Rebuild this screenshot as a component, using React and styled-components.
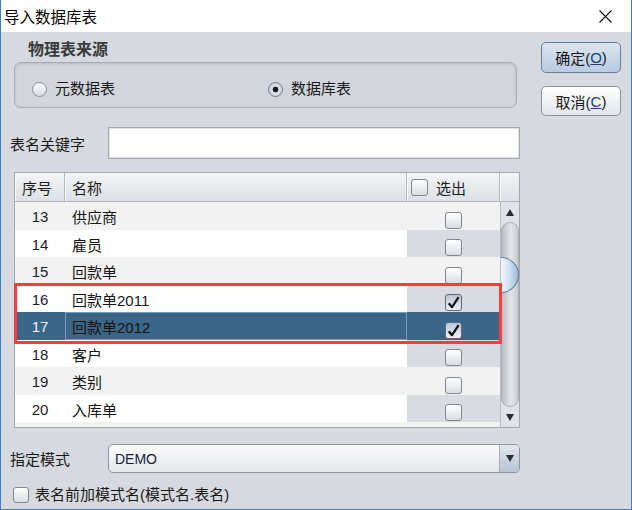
import React from 'react'
import styled, { createGlobalStyle } from 'styled-components'

const GlobalStyle = createGlobalStyle`
  html, body { margin: 0; padding: 0; background: #fff; }
  body { font-family: "Liberation Sans", "Noto Sans CJK SC", sans-serif; }
`

const Window = styled.div`
  position: relative;
  width: 632px;
  height: 510px;
  box-sizing: border-box;
  border: 1px solid #3b7fd0;
  border-top: none;
  background: #d6d9df;
  display: flex;
  flex-direction: column;
  overflow: hidden;
  font-size: 15px;
  color: #1a1a1a;
`

const TitleBar = styled.div`
  height: 32px;
  flex: none;
  background: #fff;
  display: flex;
  align-items: center;
  justify-content: space-between;
  padding: 0 19px 0 3px;
  font-size: 15.5px;
  color: #000;
`

const TopRow = styled.div`
  display: flex;
  align-items: flex-start;
  margin-top: 9px;
`

const GroupArea = styled.div`
  margin-left: 13px;
  width: 503px;
`

const GroupLabel = styled.div`
  padding-left: 14px;
  height: 18px;
  line-height: 18px;
  font-size: 16px;
  font-weight: bold;
  color: #3a3a3a;
  margin-bottom: 3px;
`

const GroupBox = styled.div`
  height: 46px;
  box-sizing: border-box;
  border: 1px solid #a7acb3;
  border-radius: 7px;
  background: #d2d5db;
  box-shadow: inset 0 1px 3px rgba(0, 0, 0, 0.12);
  display: flex;
  align-items: center;
  padding: 8px 0 0 17px;
`

const RadioItem = styled.label`
  display: flex;
  align-items: center;
  gap: 8px;
  width: ${p => p.$w || 'auto'};
  line-height: 18px;
`

const RadioDot = styled.span`
  width: 15px;
  height: 15px;
  box-sizing: border-box;
  border-radius: 50%;
  border: 1px solid ${p => (p.$on ? '#6f7c8b' : '#8a9099')};
  background: ${p => (p.$on
    ? 'radial-gradient(circle, #1c1c1c 0 2.6px, #dfe6ee 3.2px, #b7c4d2 100%)'
    : 'linear-gradient(#fdfdfd, #d7dade)')};
`

const ButtonCol = styled.div`
  margin: 1px 0 0 24px;
  display: flex;
  flex-direction: column;
  gap: 13px;
`

const DlgButton = styled.div`
  width: 80px;
  height: ${p => p.$h}px;
  box-sizing: border-box;
  border-radius: 5px;
  border: 1px solid ${p => (p.$primary ? '#60809f' : '#8d939b')};
  background: ${p => (p.$primary
    ? 'linear-gradient(#dbe5f0, #b8cbdf)'
    : 'linear-gradient(#ffffff, #e2e5e9)')};
  display: flex;
  align-items: center;
  justify-content: center;
  color: #1a1a1a;
  u { color: #233f73; }
`

const FieldRow = styled.div`
  display: flex;
  align-items: center;
  height: ${p => p.$h}px;
  margin-top: ${p => p.$mt}px;
  padding-left: 9px;
`

const FieldLabel = styled.div`
  width: 98px;
`

const TextInput = styled.div`
  width: 412px;
  height: 100%;
  box-sizing: border-box;
  background: #fff;
  border: 1px solid #a3a8ae;
  box-shadow: inset 0 0 0 1px #e2e4e8;
`

const Table = styled.div`
  position: relative;
  margin: 13px 0 0 13px;
  width: 506px;
  height: 256px;
  box-sizing: border-box;
  border: 1px solid #a2a7ae;
  display: flex;
  flex-direction: column;
  background: #fff;
`

const HeaderRow = styled.div`
  display: flex;
  height: 29px;
  flex: none;
  box-sizing: border-box;
  border-bottom: 1px solid #aeb3ba;
  background: linear-gradient(#f3f4f6, #dde0e5);
`

const HeadCell = styled.div`
  width: ${p => p.$w}px;
  box-sizing: border-box;
  border-right: ${p => (p.$last ? 'none' : '1px solid #b3b8bf')};
  box-shadow: inset 1px 0 0 #fafbfc;
  display: flex;
  align-items: center;
  gap: 8px;
  padding-left: ${p => p.$pl}px;
  color: #1c1c1c;
`

const BodyArea = styled.div`
  flex: 1;
  display: flex;
  overflow: hidden;
`

const Rows = styled.div`
  width: 485px;
  overflow: hidden;
`

const Row = styled.div`
  display: flex;
  height: 27.5px;
  background: ${p => (p.$sel ? '#3a6688' : p.$alt ? '#f2f2f2' : '#fff')};
`

const NumCell = styled.div`
  width: 50px;
  display: flex;
  align-items: center;
  justify-content: center;
  padding-top: 2px;
  box-sizing: border-box;
  color: ${p => (p.$sel ? '#f2f4f7' : '#1b1d33')};
`

const NameCell = styled.div`
  width: 342px;
  box-sizing: border-box;
  display: flex;
  align-items: center;
  padding: 2px 0 0 ${p => (p.$focus ? 6 : 7)}px;
  border: ${p => (p.$focus ? '1px solid #6e9dc6' : 'none')};
  color: #151515;
`

const CheckCell = styled.div`
  width: 93px;
  display: flex;
  align-items: flex-end;
  justify-content: center;
  padding-bottom: 1px;
  box-sizing: border-box;
  background: ${p => (p.$sel ? '#3a6688' : p.$alt ? '#f2f2f2' : '#d8dce2')};
`

const Box = styled.span`
  width: ${p => p.$s || 17}px;
  height: ${p => p.$s || 17}px;
  flex: none;
  box-sizing: border-box;
  border-radius: 3px;
  border: 1px solid ${p => (p.$on ? '#5f6b79' : '#80878f')};
  background: ${p => (p.$on
    ? 'linear-gradient(#b7c7d8, #edf1f5)'
    : 'linear-gradient(#ffffff, #dadde2)')};
  display: flex;
  align-items: center;
  justify-content: center;
`

const ScrollBar = styled.div`
  width: 19px;
  display: flex;
  flex-direction: column;
  align-items: center;
  background: #dfe2e6;
  box-shadow: inset 1px 0 0 #b9bec5;
`

const ArrowBtn = styled.div`
  height: 20px;
  flex: none;
  display: flex;
  align-items: center;
  justify-content: center;
`

const Tri = styled.span`
  width: 0;
  height: 0;
  border-left: 4px solid transparent;
  border-right: 4px solid transparent;
  ${p => (p.$up ? 'border-bottom: 7px solid #2e2e2e;' : 'border-top: 7px solid #2e2e2e;')}
`

const Track = styled.div`
  flex: 1;
  width: 18px;
  margin-left: 1px;
  border-radius: 9px;
  background: linear-gradient(to right, #b5bac1, #e4e6e9 55%, #c4c8ce);
  box-shadow: inset 0 0 0 1px #a9aeb5;
`

const Thumb = styled.div`
  margin-top: 35px;
  width: 18px;
  height: 36px;
  box-sizing: border-box;
  border-radius: 0 18px 18px 0;
  border: 1px solid #5f7f9d;
  border-left: none;
  background: linear-gradient(to right, #f2f7fc, #cddff0 50%, #9fbcd8);
`

const Combo = styled.div`
  width: 412px;
  height: 100%;
  box-sizing: border-box;
  border: 1px solid #8e949c;
  border-radius: 5px;
  background: linear-gradient(#fbfbfc, #e3e6ea);
  display: flex;
  overflow: hidden;
`

const ComboText = styled.div`
  flex: 1;
  display: flex;
  align-items: center;
  padding-left: 6px;
  font-size: 14px;
  color: #17223f;
`

const ComboArrow = styled.div`
  width: 19px;
  border-left: 1px solid #a3a9b1;
  background: linear-gradient(#e2e8ef, #b6c4d3);
  display: flex;
  align-items: center;
  justify-content: center;
`

const CheckRow = styled.label`
  display: flex;
  align-items: center;
  gap: 6px;
  margin: 13px 0 0 12px;
  height: 17px;
  line-height: 17px;
`

const Highlight = styled.div`
  position: absolute;
  left: -1px;
  top: 110px;
  width: 488px;
  height: 61px;
  box-sizing: border-box;
  border: 3px solid #fb3c3c;
  pointer-events: none;
`

const Check = () => (
  <svg width="13" height="13" viewBox="0 0 13 13">
    <path d="M1.8 7.2 L5 11.2 L11.6 1.2" fill="none" stroke="#0d0d0d" strokeWidth="2.2" strokeLinejoin="round" />
  </svg>
)

const CloseIcon = () => (
  <svg width="13" height="13" viewBox="0 0 13 13">
    <path d="M0.5 0.5 L12.5 12.5 M12.5 0.5 L0.5 12.5" stroke="#111" strokeWidth="1.1" />
  </svg>
)

const rows = [
  { n: 13, name: '供应商' },
  { n: 14, name: '雇员' },
  { n: 15, name: '回款单' },
  { n: 16, name: '回款单2011', on: true },
  { n: 17, name: '回款单2012', on: true, sel: true },
  { n: 18, name: '客户' },
  { n: 19, name: '类别' },
  { n: 20, name: '入库单' },
  { n: null, name: '' },
]

export default function App() {
  return (
    <>
      <GlobalStyle />
      <Window>
        <TitleBar>
          <span>导入数据库表</span>
          <CloseIcon />
        </TitleBar>

        <TopRow>
          <GroupArea>
            <GroupLabel>物理表来源</GroupLabel>
            <GroupBox>
              <RadioItem $w="236px"><RadioDot />元数据表</RadioItem>
              <RadioItem><RadioDot $on />数据库表</RadioItem>
            </GroupBox>
          </GroupArea>
          <ButtonCol>
            <DlgButton $primary $h={31}>确定(<u>O</u>)</DlgButton>
            <DlgButton $h={30}>取消(<u>C</u>)</DlgButton>
          </ButtonCol>
        </TopRow>

        <FieldRow $h={32} $mt={11}>
          <FieldLabel>表名关键字</FieldLabel>
          <TextInput />
        </FieldRow>

        <Table>
          <HeaderRow>
            <HeadCell $w={50} $pl={7}>序号</HeadCell>
            <HeadCell $w={342} $pl={7}>名称</HeadCell>
            <HeadCell $w={93} $pl={4}><Box />选出</HeadCell>
            <HeadCell $w={19} $last />
          </HeaderRow>
          <BodyArea>
            <Rows>
              {rows.map((r, i) => {
                const alt = i % 2 === 0
                return (
                  <Row key={i} $alt={alt} $sel={r.sel}>
                    <NumCell $sel={r.sel}>{r.n}</NumCell>
                    <NameCell $focus={r.sel}>{r.name}</NameCell>
                    <CheckCell $alt={alt} $sel={r.sel}>
                      {r.n && <Box $on={r.on}>{r.on && <Check />}</Box>}
                    </CheckCell>
                  </Row>
                )
              })}
            </Rows>
            <ScrollBar>
              <ArrowBtn><Tri $up /></ArrowBtn>
              <Track><Thumb /></Track>
              <ArrowBtn><Tri /></ArrowBtn>
            </ScrollBar>
          </BodyArea>
          <Highlight />
        </Table>

        <FieldRow $h={29} $mt={16}>
          <FieldLabel>指定模式</FieldLabel>
          <Combo>
            <ComboText>DEMO</ComboText>
            <ComboArrow><Tri /></ComboArrow>
          </Combo>
        </FieldRow>

        <CheckRow>
          <Box $s={16} />
          表名前加模式名(模式名.表名)
        </CheckRow>
      </Window>
    </>
  )
}
